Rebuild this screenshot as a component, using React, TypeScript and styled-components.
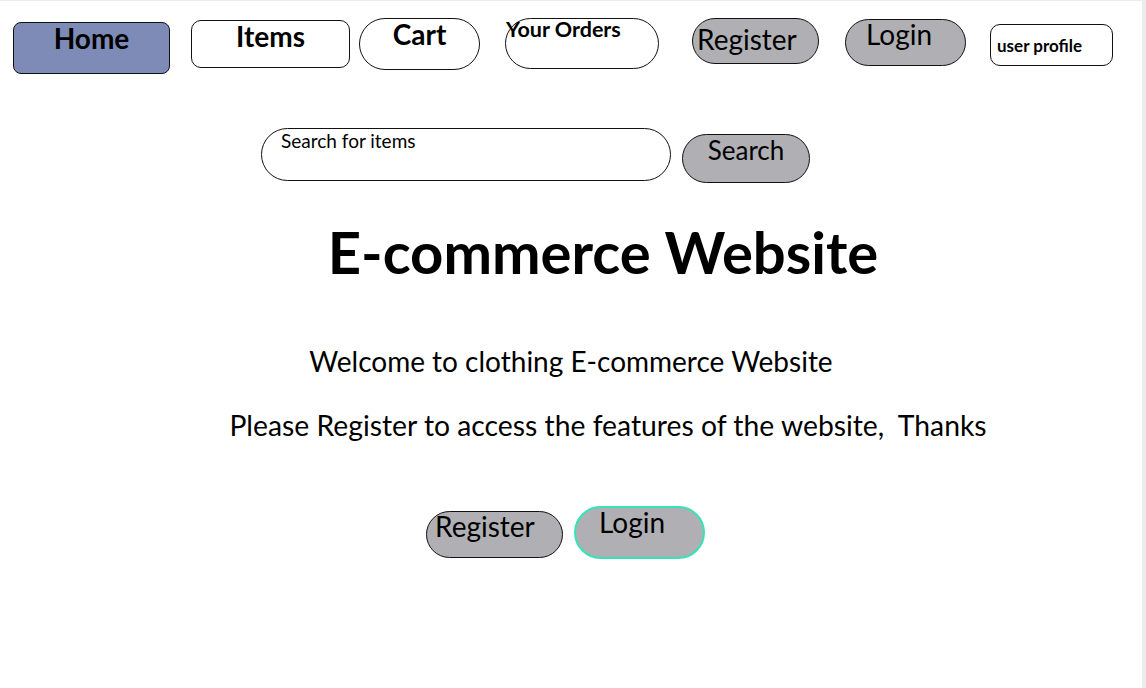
import styled, { createGlobalStyle } from "styled-components";

const GlobalStyle = createGlobalStyle`
  html, body {
    margin: 0;
    padding: 0;
    background: #ececec;
  }
  body {
    font-family: Lato, "Liberation Sans", sans-serif;
    color: #000;
  }
  * {
    box-sizing: border-box;
  }
`;

const Page = styled.div`
  margin: 1px 4px 0 0;
  min-height: 687px;
  background: #fff;
  display: flex;
  flex-direction: column;
`;

const Nav = styled.nav`
  display: flex;
  align-items: flex-start;
  height: 73px;
  padding-left: 13px;
`;

interface BtnProps {
  $w: number;
  $h: number;
  $top?: number;
  $gap?: number;
  $radius?: number;
  $bg?: string;
  $size: number;
  $bold?: boolean;
  $left?: boolean;
  $middle?: boolean;
  $padTop?: number;
  $padLeft?: number;
  $border?: string;
}

const Btn = styled.button<BtnProps>`
  flex: none;
  display: flex;
  justify-content: ${(p) => (p.$left ? "flex-start" : "center")};
  align-items: ${(p) => (p.$middle ? "center" : "flex-start")};
  width: ${(p) => p.$w}px;
  height: ${(p) => p.$h}px;
  margin: ${(p) => p.$top || 0}px 0 0 ${(p) => p.$gap || 0}px;
  padding: ${(p) => p.$padTop || 0}px 0 0 ${(p) => p.$padLeft || 0}px;
  border: ${(p) => p.$border || "1px solid #111"};
  border-radius: ${(p) => (p.$radius === undefined ? 30 : p.$radius)}px;
  background: ${(p) => p.$bg || "#fff"};
  font-family: Lato, "Liberation Sans", sans-serif;
  font-size: ${(p) => p.$size}px;
  font-weight: ${(p) => (p.$bold ? 700 : 400)};
  line-height: 1;
  color: #000;
  white-space: nowrap;
  cursor: pointer;
`;

const SearchRow = styled.div`
  display: flex;
  align-items: flex-start;
  gap: 11px;
  margin-top: 54px;
  padding-left: 261px;
`;

const SearchInput = styled.input`
  width: 410px;
  height: 53px;
  padding: 0 0 28px 19px;
  border: 1px solid #111;
  border-radius: 27px;
  font-family: Lato, "Liberation Sans", sans-serif;
  font-size: 19px;
  outline: none;
  &::placeholder {
    color: #000;
    opacity: 1;
  }
`;

const Title = styled.h1`
  margin: 34px 0 0;
  padding-left: 64px;
  text-align: center;
  font-size: 58px;
  font-weight: 700;
  line-height: 1.2;
`;

const Line = styled.p<{ $top: number; $shift?: number; $size: number }>`
  margin: ${(p) => p.$top}px 0 0;
  padding-left: ${(p) => p.$shift || 0}px;
  text-align: center;
  font-size: ${(p) => p.$size}px;
  line-height: 1.2;
  white-space: pre;
`;

const Actions = styled.div`
  display: flex;
  align-items: flex-start;
  justify-content: center;
  gap: 11px;
  margin-top: 63px;
  padding-right: 11px;
`;

const GREY = "#b0b0b4";

export default function App() {
  return (
    <>
      <GlobalStyle />
      <Page>
        <Nav>
          <Btn $w={157} $h={52} $top={21} $radius={8} $bg="#7e8bb6" $size={28} $bold $padTop={1}>
            Home
          </Btn>
          <Btn $w={159} $h={48} $top={19} $gap={21} $radius={10} $size={28} $bold $padTop={1}>
            Items
          </Btn>
          <Btn $w={121} $h={52} $top={17} $gap={9} $size={28} $bold $padTop={1}>
            Cart
          </Btn>
          <Btn $w={154} $h={51} $top={17} $gap={25} $size={21.5} $bold $left>
            Your Orders
          </Btn>
          <Btn $w={127} $h={46} $top={17} $gap={33} $bg={GREY} $size={28} $left $padLeft={4} $padTop={6}>
            Register
          </Btn>
          <Btn $w={121} $h={47} $top={18} $gap={26} $bg={GREY} $size={28} $left $padLeft={20}>
            Login
          </Btn>
          <Btn $w={123} $h={42} $top={23} $gap={24} $radius={10} $size={17} $bold $left $middle $padLeft={6}>
            user profile
          </Btn>
        </Nav>

        <SearchRow>
          <SearchInput placeholder="Search for items" />
          <Btn $w={128} $h={49} $top={6} $bg={GREY} $size={26} $padTop={2}>
            Search
          </Btn>
        </SearchRow>

        <Title>E-commerce Website</Title>

        <Line $top={58} $size={28}>
          Welcome to clothing E-commerce Website
        </Line>
        <Line $top={31} $shift={74} $size={28.3}>
          {"Please Register to access the features of the website,  Thanks"}
        </Line>

        <Actions>
          <Btn $w={137} $h={47} $top={5} $bg={GREY} $size={28} $left $padLeft={8}>
            Register
          </Btn>
          <Btn $w={131} $h={53} $bg={GREY} $size={28} $left $padLeft={23} $border="2px solid #35e3b6">
            Login
          </Btn>
        </Actions>
      </Page>
    </>
  );
}
